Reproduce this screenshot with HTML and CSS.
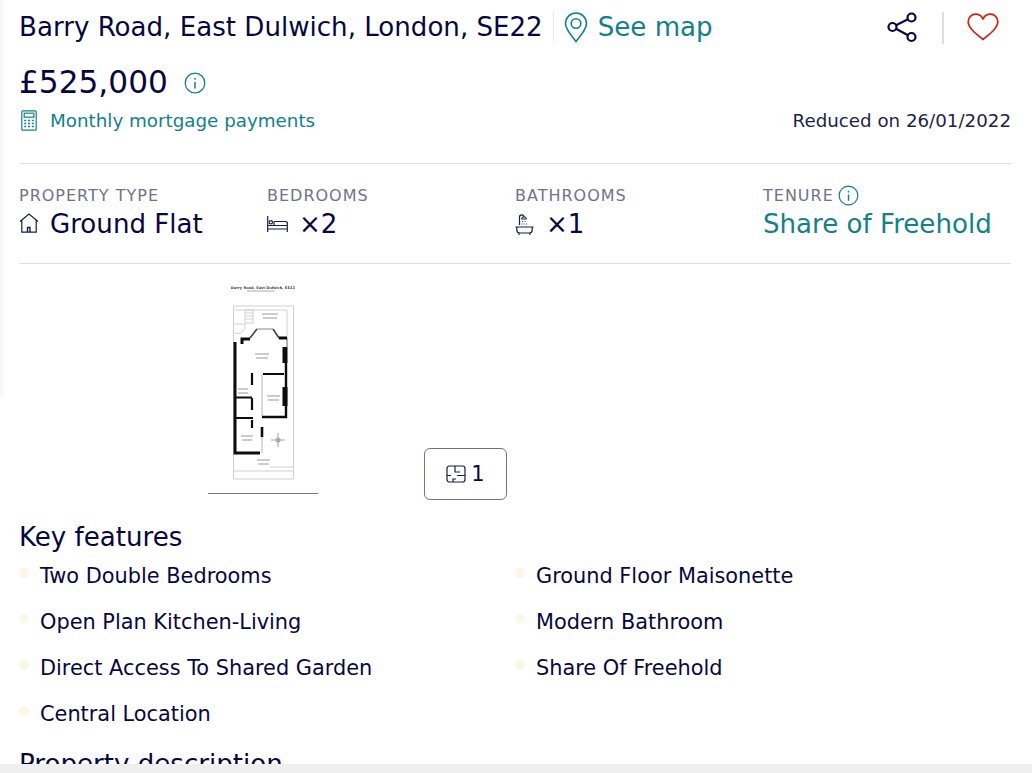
FILE: index.html
```html
<!DOCTYPE html>
<html lang="en">
<head>
  <meta charset="UTF-8" />
  <meta name="viewport" content="width=device-width, initial-scale=1.0"/>
  <title>Barry Road, East Dulwich, London, SE22</title>
  <link rel="stylesheet" href="styles.css">
</head>
<body>

  <main class="listing">
    <header class="title-row">
      <h1 class="address">Barry Road, East Dulwich, London, SE22</h1>
      <a class="see-map" href="#">
        <svg class="pin-icon" viewBox="0 0 24 32" fill="none" stroke="#13808a" stroke-width="1.6">
          <path d="M12 30.500C7 24 1.500 18.500 1.500 12.500a10.500 10.500 0 0 1 21 0C22.500 18.500 17 24 12 30.500z"/>
          <circle cx="12" cy="12.500" r="4.800"/>
        </svg>
        See map
      </a>
      <div class="actions">
        <svg class="share-icon" viewBox="0 0 32 32" fill="none" stroke="#07073f" stroke-width="2.200">
          <circle cx="25.500" cy="6.500" r="4"/>
          <circle cx="6.500" cy="16" r="4"/>
          <circle cx="25.500" cy="26" r="4"/>
          <path d="M10 14.200l12-6M10 17.800l12 6.400"/>
        </svg>
        <span class="action-divider"></span>
        <svg class="heart-icon" viewBox="0 0 32 28" fill="none" stroke="#cf2016" stroke-width="1.700">
          <path d="M16 26.500C10 21.500 1.200 15.500 1.200 8.500 1.200 4.300 4.500 1.200 8.600 1.200c3 0 5.800 1.700 7.400 4.600 1.600-2.900 4.400-4.600 7.400-4.600 4.100 0 7.400 3.100 7.400 7.300 0 7-8.800 13-14.800 18z"/>
        </svg>
      </div>
    </header>

    <div class="price-row">
      <span class="price">£525,000</span>
      <svg class="info-icon" viewBox="0 0 22 22" fill="none" stroke="#13808a" stroke-width="1.300">
        <circle cx="11" cy="11" r="9.800"/>
        <path d="M11 10v6.500M11 6v1.800" stroke-width="1.500"/>
      </svg>
    </div>

    <div class="mortgage-row">
      <a class="mortgage" href="#">
        <svg class="calc-icon" viewBox="0 0 16 21" fill="none" stroke="#13808a" stroke-width="1.200">
          <rect x="0.800" y="0.800" width="14.400" height="19.400" rx="1"/>
          <rect x="3.200" y="3.200" width="9.600" height="4"/>
          <path d="M3.200 10.500h2M7 10.500h2M10.800 10.500h2M3.200 13.500h2M7 13.500h2M10.800 13.500h2M3.200 16.500h2M7 16.500h2M10.800 16.500h2" stroke-width="1.700"/>
        </svg>
        Monthly mortgage payments
      </a>
      <span class="reduced">Reduced on 26/01/2022</span>
    </div>

    <section class="facts">
      <div class="fact">
        <div class="fact-label">PROPERTY TYPE</div>
        <div class="fact-value">
          <svg class="house-icon" viewBox="0 0 20 20" fill="none" stroke="#1c1c44" stroke-width="1.200">
            <path d="M1 8.500L10 1l9 7.500M2.800 7.500v11.700h14.400V7.500"/>
            <path d="M8.500 19v-4.500h2.500V19" stroke-width="1.400"/>
          </svg>
          Ground Flat
        </div>
      </div>
      <div class="fact">
        <div class="fact-label">BEDROOMS</div>
        <div class="fact-value">
          <svg class="bed-icon" viewBox="0 0 21 16" fill="none" stroke="#1c1c44" stroke-width="1.200">
            <path d="M0.700 0v16M20.300 6v10M0.700 13h19.600M0.700 9.500h19.600M7 5.500h11.500a1.800 1.800 0 0 1 1.800 1.800V9.500M7 5.500v4"/>
            <circle cx="3.800" cy="6.300" r="1.700"/>
          </svg>
          <span class="count count-bed">×2</span>
        </div>
      </div>
      <div class="fact">
        <div class="fact-label">BATHROOMS</div>
        <div class="fact-value">
          <svg class="bath-icon" viewBox="0 0 19 21" fill="none" stroke="#1c1c44" stroke-width="1.200">
            <path d="M0.500 13h18M1.800 13v3a3 3 0 0 0 3 3h9.400a3 3 0 0 0 3-3v-3M4 19v2M15 19v2"/>
            <path d="M4.500 11V3a2.200 2.200 0 0 1 4.400 0"/>
            <path d="M6.500 5h5l-1-2h-3z" stroke-width="1"/>
            <path d="M7.500 7v1M10 7v1M7 9.500v1M9 9.500v1M11.500 9.500v1" stroke-width="0.900"/>
          </svg>
          <span class="count">×1</span>
        </div>
      </div>
      <div class="fact">
        <div class="fact-label">
          TENURE
          <svg class="tenure-info" viewBox="0 0 22 22" fill="none" stroke="#13808a" stroke-width="1.300">
            <circle cx="11" cy="11" r="9.800"/>
            <path d="M11 10v6.500M11 6v1.800" stroke-width="1.500"/>
          </svg>
        </div>
        <a class="fact-value fact-link" href="#">Share of Freehold</a>
      </div>
    </section>

    <section class="floorplan">
      <div class="plan-thumb">
        <svg class="plan" viewBox="207 282 114 216">
          <text class="plan-heading" x="263" y="288.500" text-anchor="middle">Barry Road, East Dulwich, SE22</text>
          <path d="M247 291h28" stroke="#aaa" stroke-width="1"/>
          <g fill="none" stroke="#cccccc" stroke-width="0.900">
            <path d="M233.500 306H293.500V479H233.500z"/>
            <path d="M234 471H293M293 467H270"/>
            <path d="M235 310H287V338"/>
            <path d="M245 310h8v13h-8zM245 313h8M245 316h8M245 319h8"/>
            <path d="M234 324h11a8 8 0 0 1-11 9"/>
            <path d="M262 374V416M262 437V453" stroke="#aaa"/>
          </g>
          <path d="M257 329H273" fill="none" stroke="#888" stroke-width="1"/>
          <path d="M250 338L257 329M273 329L279 338" fill="none" stroke="#444" stroke-width="1.600"/>
          <path d="M287 338V347" fill="none" stroke="#666" stroke-width="1"/>
          <g fill="none" stroke="#0c0c0c" stroke-width="3">
            <path d="M235 342V453H260"/>
            <path d="M242 344V339H250M279 338H287"/>
            <path d="M286 363V417H262" stroke-width="2.400"/>
            <path d="M263 374H284M252 373V385" stroke-width="2.200"/>
            <path d="M235 397.500H252M252 398V410" stroke-width="2.200"/>
            <path d="M235 418H253M252 420V428" stroke-width="2.200"/>
            <path d="M262 427V437" stroke-width="2.600"/>
          </g>
          <rect x="282.500" y="347" width="5" height="16" fill="#0c0c0c"/>
          <rect x="282.500" y="387" width="5" height="19" fill="#0c0c0c"/>
          <g stroke="#999" stroke-width="1.100" fill="none">
            <path d="M262 314h16M263 318h14"/>
            <path d="M255 354h14M256 358h12"/>
            <path d="M267 396h13M268 400h11"/>
            <path d="M238 389h10M238 393h10"/>
            <path d="M241 436h12M242 440h10"/>
            <path d="M257 460h13M258 464h11"/>
          </g>
          <path d="M278 433v14M271 440h14" stroke="#999" stroke-width="0.900"/>
          <circle cx="278" cy="440" r="2.500" fill="#aaa"/>
          <path d="M208 493.500h110" stroke="#777" stroke-width="1.200"/>
        </svg>
        <button class="plan-count" type="button">
          <svg class="plan-icon" viewBox="0 0 20 18" fill="none" stroke="#1c1c44" stroke-width="1.200">
            <rect x="1" y="1" width="18" height="16" rx="2.500"/>
            <path d="M9 1v6h5M11 10.500h8M1 10.500h4M7 17v-3h3"/>
          </svg>
          1
        </button>
      </div>
    </section>

    <section class="features">
      <h2 class="section-title">Key features</h2>
      <ul class="feature-list">
        <li>Two Double Bedrooms</li>
        <li>Ground Floor Maisonette</li>
        <li>Open Plan Kitchen-Living</li>
        <li>Modern Bathroom</li>
        <li>Direct Access To Shared Garden</li>
        <li>Share Of Freehold</li>
        <li>Central Location</li>
      </ul>
    </section>

    <h2 class="section-title description-title">Property description</h2>
  </main>

  <div class="edge-left"></div>
  <div class="edge-bottom"></div>

</body>
</html>
```

FILE: styles.css
```css
* {
  box-sizing: border-box;
}

html,
body {
  height: 100%;
  margin: 0;
  overflow: hidden;
}

body {
  background: #ffffff;
  color: #07073f;
  font-family: 'DejaVu Sans', sans-serif;
}

a {
  color: #13808a;
  text-decoration: none;
}

.listing {
  padding: 0 21px 0 19px;
}

.title-row {
  display: flex;
  align-items: center;
  height: 54px;
}

.address {
  margin: 0;
  padding-right: 10px;
  border-right: 1px solid #e6e6ea;
  font-size: 26.100px;
  font-weight: 400;
  line-height: 30px;
}

.see-map {
  display: flex;
  align-items: center;
  gap: 10px;
  margin-left: 10px;
  font-size: 26.100px;
}

.pin-icon {
  width: 24px;
  height: 32px;
}

.actions {
  display: flex;
  align-items: center;
  margin-left: auto;
}

.share-icon {
  width: 32px;
  height: 32px;
  margin-right: 1px;
}

.action-divider {
  width: 2px;
  height: 32px;
  margin: 2px 23px 0 23px;
  background: #dcdce4;
}

.heart-icon {
  width: 32px;
  height: 28px;
  margin-right: 12px;
}

.price-row {
  display: flex;
  align-items: center;
  gap: 16px;
  height: 56px;
}

.price {
  font-size: 31.200px;
}

.info-icon {
  width: 22px;
  height: 22px;
  margin-top: 1px;
}

.mortgage-row {
  display: flex;
  align-items: center;
  justify-content: space-between;
  height: 22px;
  margin-top: -1px;
}

.mortgage {
  display: flex;
  align-items: center;
  gap: 13px;
  font-size: 18.300px;
}

.calc-icon {
  width: 16px;
  height: 21px;
  margin-left: 2px;
}

.reduced {
  color: #1f1f4a;
  font-size: 18.240px;
}

.facts {
  display: grid;
  grid-template-columns: repeat(4, 248px);
  height: 101px;
  margin-top: 32px;
  padding-top: 21px;
  border-top: 1px solid #dfdfdf;
  border-bottom: 1px solid #dfdfdf;
}

.fact-label {
  display: flex;
  align-items: center;
  gap: 4px;
  height: 20px;
  color: #72728a;
  font-size: 16px;
  letter-spacing: 1px;
}

.fact-value {
  display: flex;
  align-items: center;
  height: 36px;
  padding-top: 2px;
  font-size: 26.100px;
}

.fact-link {
  color: #13808a;
}

.count {
  margin-left: 12px;
}

.count-bed {
  margin-left: 11px;
}

.house-icon {
  width: 20px;
  height: 20px;
  margin: -2px 11px 0 0;
}

.bed-icon {
  width: 21px;
  height: 16px;
}

.bath-icon {
  width: 19px;
  height: 21px;
}

.tenure-info {
  width: 21px;
  height: 21px;
}

.floorplan {
  height: 236px;
}

.plan-thumb {
  display: flex;
  align-items: flex-end;
  height: 100%;
}

.plan {
  display: block;
  width: 114px;
  height: 216px;
  margin: 0 0 2px 188px;
  filter: blur(0.6px);
}

.plan-heading {
  fill: #444444;
  font-size: 3.600px;
  font-weight: 700;
}

.plan-count {
  display: flex;
  align-items: center;
  justify-content: center;
  gap: 5px;
  width: 83px;
  height: 52px;
  margin: 0 0 0 103px;
  padding: 0;
  background: #ffffff;
  border: 1px solid #72728a;
  border-radius: 6px;
  color: #07073f;
  font-family: inherit;
  font-size: 21px;
}

.plan-icon {
  width: 20px;
  height: 18px;
}

.section-title {
  margin: 0;
  font-size: 26.100px;
  font-weight: 400;
  line-height: 34px;
}

.features {
  margin-top: 20px;
}

.feature-list {
  display: grid;
  grid-template-columns: 496px 1fr;
  grid-auto-rows: 46px;
  margin: 0;
  padding: 7px 0 0;
  list-style: none;
}

.feature-list li {
  display: flex;
  align-items: flex-start;
  padding-left: 21px;
  position: relative;
  font-size: 20.860px;
  line-height: 30px;
}

.feature-list li::before {
  content: "";
  position: absolute;
  left: 0;
  top: 7px;
  width: 10px;
  height: 10px;
  border-radius: 50%;
  background: #fdf5e8;
}

.description-title {
  margin-top: 2px;
}

.edge-left {
  position: fixed;
  left: 0;
  top: 0;
  width: 3px;
  height: 395px;
  background: #f7f7f7;
}

.edge-bottom {
  position: fixed;
  left: 0;
  right: 0;
  bottom: 0;
  height: 9px;
  background: #efefef;
}
```
